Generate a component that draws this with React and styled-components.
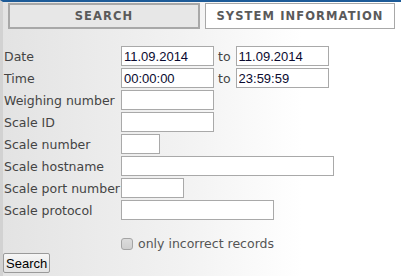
import React from "react";
import styled, { createGlobalStyle } from "styled-components";

const GlobalStyle = createGlobalStyle`
  html, body {
    margin: 0;
    padding: 0;
    background: #ffffff;
  }
`;

const Page = styled.div`
  box-sizing: border-box;
  width: 401px;
  height: 276px;
  border-top: 2px solid #1d5b98;
  border-left: 3px solid #d2d2d2;
  padding: 1px 0 0 1px;
  background: linear-gradient(to right, #e3e3e3 0%, #f2f2f2 45%, #ffffff 75%);
  font-family: "DejaVu Sans", Verdana, sans-serif;
  font-size: 12.5px;
  color: #444444;
  overflow: hidden;
`;

const TabBar = styled.div`
  display: flex;
  gap: 5px;
  padding: 0 6px 0 4px;
`;

const Tab = styled.div`
  box-sizing: border-box;
  flex: 1;
  height: 26px;
  display: flex;
  align-items: center;
  justify-content: center;
  border: ${(p) => (p.$active ? "2px solid #a8a8a8" : "1px solid #a8a8a8")};
  background: ${(p) => (p.$active ? "#e7e7e7" : "#ffffff")};
  font-family: "DejaVu Sans", Verdana, sans-serif;
  font-weight: bold;
  font-size: 11.5px;
  letter-spacing: 1.1px;
  color: #5a5a5a;
`;

const Form = styled.div`
  display: grid;
  grid-template-columns: 117px auto;
  grid-auto-rows: 20px;
  row-gap: 2px;
  margin-top: 17px;
`;

const Label = styled.div`
  display: flex;
  align-items: center;
  white-space: nowrap;
`;

const Field = styled.div`
  display: flex;
  align-items: center;
`;

const Input = styled.input`
  box-sizing: border-box;
  width: ${(p) => p.$w}px;
  height: 20px;
  margin: 0;
  padding: 0 2px;
  border: 1px solid #a9a9a9;
  background: #ffffff;
  font-family: "Liberation Sans", Arial, sans-serif;
  font-size: 13px;
  color: #0a0a30;
  outline: none;
`;

const To = styled.span`
  margin: 0 5px 0 4px;
`;

const CheckRow = styled.label`
  display: flex;
  align-items: center;
  gap: 5px;
  margin: 16px 0 0 117px;
  color: #555555;
`;

const Box = styled.span`
  box-sizing: border-box;
  width: 12px;
  height: 12px;
  border: 1px solid #a4a4a4;
  border-radius: 3px;
  background: linear-gradient(#dcdcdc, #cfcfcf);
`;

const Button = styled.button`
  box-sizing: border-box;
  display: block;
  margin: 2px 0 0 -1px;
  height: 20px;
  padding: 0 2px;
  border: 1px solid #9a9a9a;
  border-radius: 2px;
  background: linear-gradient(#f6f6f6, #e4e4e4);
  font-family: "Liberation Sans", Arial, sans-serif;
  font-size: 13px;
  color: #000000;
`;

const rows = [
  { label: "Date", from: "11.09.2014", to: "11.09.2014", w: 93 },
  { label: "Time", from: "00:00:00", to: "23:59:59", w: 93 },
  { label: "Weighing number", w: 93 },
  { label: "Scale ID", w: 93 },
  { label: "Scale number", w: 39 },
  { label: "Scale hostname", w: 213 },
  { label: "Scale port number", w: 63 },
  { label: "Scale protocol", w: 153 },
];

export default function App() {
  return (
    <>
      <GlobalStyle />
      <Page>
        <TabBar>
          <Tab $active>SEARCH</Tab>
          <Tab>SYSTEM INFORMATION</Tab>
        </TabBar>
        <Form>
          {rows.map((r) => (
            <React.Fragment key={r.label}>
              <Label>{r.label}</Label>
              <Field>
                <Input $w={r.w} defaultValue={r.from || ""} />
                {r.to && (
                  <>
                    <To>to</To>
                    <Input $w={r.w} defaultValue={r.to} />
                  </>
                )}
              </Field>
            </React.Fragment>
          ))}
        </Form>
        <CheckRow>
          <Box />
          only incorrect records
        </CheckRow>
        <Button>Search</Button>
      </Page>
    </>
  );
}
